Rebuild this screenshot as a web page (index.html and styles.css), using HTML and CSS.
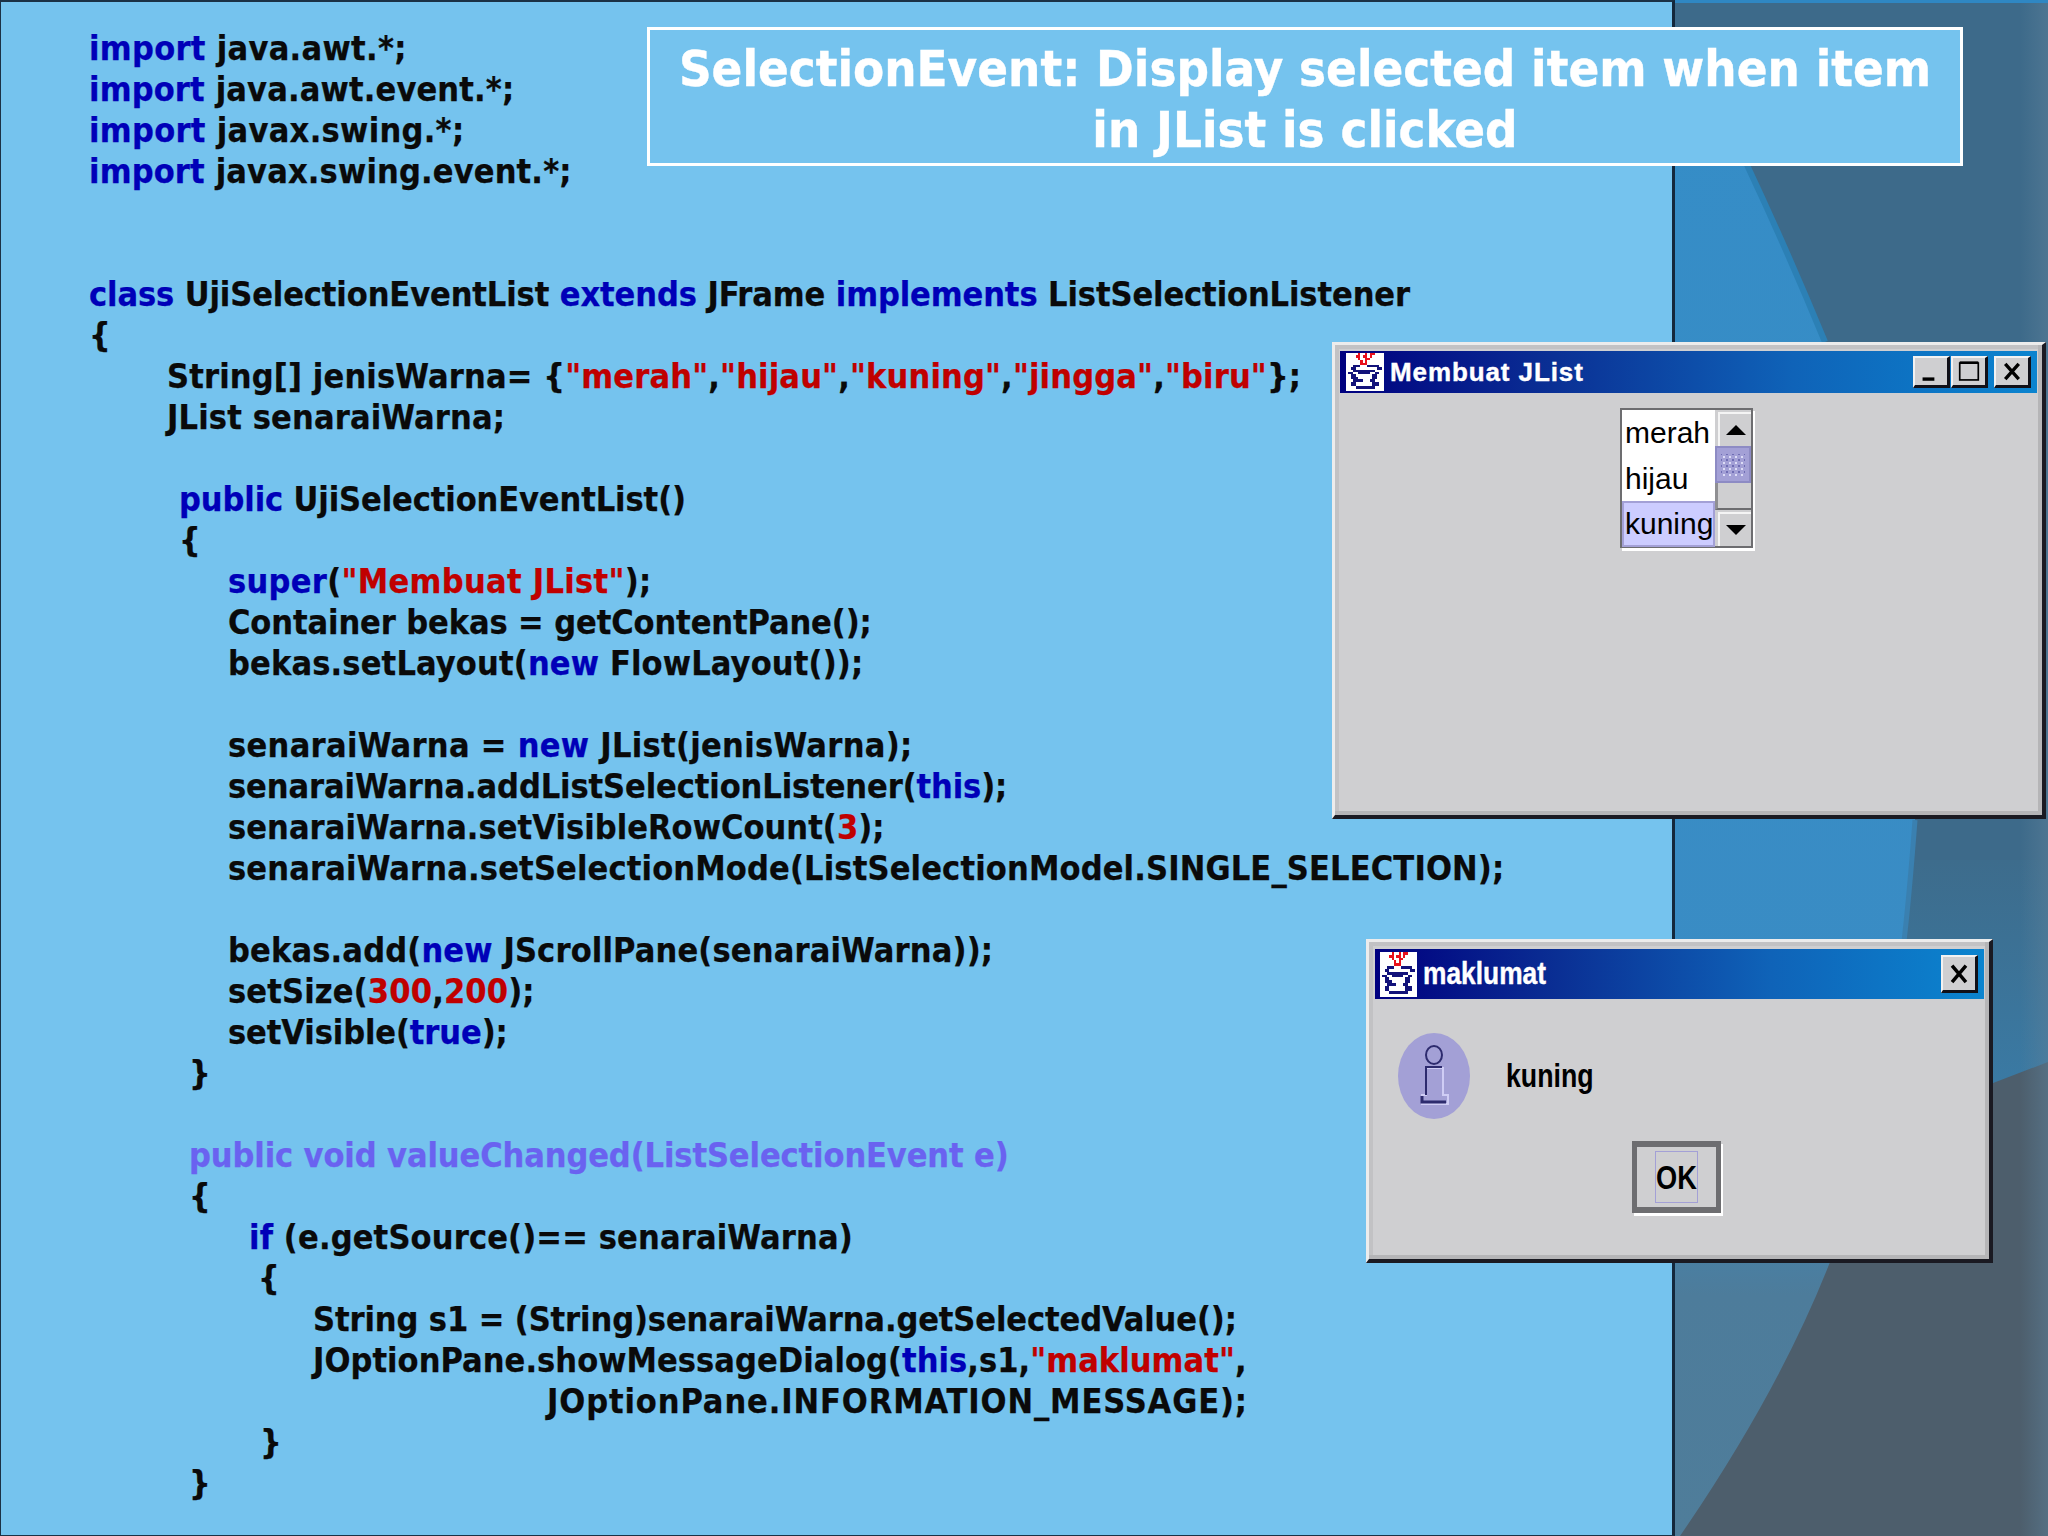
FILE: index.html
```html
<!DOCTYPE html>
<html lang="en">
<head>
<meta charset="utf-8">
<title>SelectionEvent</title>
<link rel="stylesheet" href="styles.css">
</head>
<body>
<svg class="defs" width="0" height="0" aria-hidden="true">
  <symbol id="duke" viewBox="0 0 16 16" preserveAspectRatio="none" shape-rendering="crispEdges">
    <rect width="16" height="16" fill="#fff"/>
    <path fill="#e8101c" d="M5 0h1v1H5zM8 0h1v1H8zM10 0h2v1h-2zM4 1h2v1H4zM7 1h2v1H7zM10 1h1v1h-1zM5 2h1v1H5zM8 2h2v1H8zM6 3h1v1H6zM8 3h1v1H8zM6 4h3v1H6z"/>
    <path fill="#12127a" d="M3 5h3v1H3zM9 5h5v1H9zM2 6h2v1H2zM13 6h2v1h-2zM3 7h9v1H3zM1 8h2v1H1zM5 8h5v1H5zM12 8h2v1h-2zM2 9h2v2H2zM11 9h2v2h-2zM4 10h1v1H4zM10 11h2v1h-2zM3 11h4v1H3zM2 12h2v2H2zM11 12h3v2h-3zM4 14h8v1H4z"/>
  </symbol>
</svg>
<main class="slide">
  <section class="panel">
    <div class="code">
      <div class="ln t3"><span class="kw">import</span> java.awt.*;</div>
      <div class="ln t2"><span class="kw">import</span> java.awt.event.*;</div>
      <div class="ln t3"><span class="kw">import</span> javax.swing.*;</div>
      <div class="ln t2"><span class="kw">import</span> javax.swing.event.*;</div>
      <div class="ln"></div>
      <div class="ln"></div>
      <div class="ln"><span class="kw">class</span> UjiSelectionEventList <span class="kw">extends</span> JFrame <span class="kw">implements</span> ListSelectionListener</div>
      <div class="ln">{</div>
      <div class="ln i78 t2">String[] jenisWarna= {<span class="str">"merah"</span>,<span class="str">"hijau"</span>,<span class="str">"kuning"</span>,<span class="str">"jingga"</span>,<span class="str">"biru"</span>};</div>
      <div class="ln i78 t2">JList senaraiWarna;</div>
      <div class="ln"></div>
      <div class="ln i90"><span class="kw">public</span> UjiSelectionEventList()</div>
      <div class="ln i90">{</div>
      <div class="ln i139 t3"><span class="kw">super</span>(<span class="str">"Membuat JList"</span>);</div>
      <div class="ln i139">Container bekas = getContentPane();</div>
      <div class="ln i139 t2">bekas.setLayout(<span class="kw">new</span> FlowLayout());</div>
      <div class="ln"></div>
      <div class="ln i139 t3">senaraiWarna = <span class="kw">new</span> JList(jenisWarna);</div>
      <div class="ln i139">senaraiWarna.addListSelectionListener(<span class="kw">this</span>);</div>
      <div class="ln i139 t1">senaraiWarna.setVisibleRowCount(<span class="str">3</span>);</div>
      <div class="ln i139 t2">senaraiWarna.setSelectionMode(ListSelectionModel.SINGLE_SELECTION);</div>
      <div class="ln"></div>
      <div class="ln i139 t2">bekas.add(<span class="kw">new</span> JScrollPane(senaraiWarna));</div>
      <div class="ln i139 t2">setSize(<span class="str">300</span>,<span class="str">200</span>);</div>
      <div class="ln i139">setVisible(<span class="kw">true</span>);</div>
      <div class="ln i100">}</div>
      <div class="ln"></div>
      <div class="ln i100 hl">public void valueChanged(ListSelectionEvent e)</div>
      <div class="ln i100">{</div>
      <div class="ln i160 t2"><span class="kw">if</span> (e.getSource()== senaraiWarna)</div>
      <div class="ln i169">{</div>
      <div class="ln i224">String s1 = (String)senaraiWarna.getSelectedValue();</div>
      <div class="ln i224 t1">JOptionPane.showMessageDialog(<span class="kw">this</span>,s1,<span class="str">"maklumat"</span>,</div>
      <div class="ln i458 t9">JOptionPane.INFORMATION_MESSAGE);</div>
      <div class="ln i171">}</div>
      <div class="ln i100">}</div>
    </div>
  </section>

  <div class="backdrop">
    <svg class="backdrop-art" viewBox="0 0 373 1536" preserveAspectRatio="none" aria-hidden="true">
      <defs>
        <linearGradient id="arcFill" x1="0" y1="0" x2="0" y2="1">
          <stop offset="0" stop-color="#358dc7"/>
          <stop offset="0.7" stop-color="#3a8cc4"/>
          <stop offset="0.84" stop-color="#4d7c9b"/>
          <stop offset="1" stop-color="#4f7d9a"/>
        </linearGradient>
        <linearGradient id="edgeFill" x1="0" y1="0" x2="1" y2="0">
          <stop offset="0" stop-color="#5c8099" stop-opacity="0"/>
          <stop offset="1" stop-color="#5c8099" stop-opacity=".5"/>
        </linearGradient>
        <linearGradient id="riseFill" x1="0" y1="0" x2="0" y2="1">
          <stop offset="0" stop-color="#3d6c8c"/>
          <stop offset="1" stop-color="#3a7aa4"/>
        </linearGradient>
      </defs>
      <rect width="373" height="1536" fill="#3d6a8a"/>
      <rect x="200" y="860" width="173" height="230" fill="url(#riseFill)"/>
      <path fill="#4d5e6c" d="M0 1536V1200L300 1090L373 1062V1536Z"/>
      <path fill="url(#arcFill)" d="M-5 30H25Q40 85 72 165Q112 250 150 342Q240 600 240 820Q234 900 228 950Q200 1110 155 1262Q105 1390 5 1536H-5Z"/>
      <path fill="none" stroke="#2c80b5" stroke-width="6" d="M72 165Q112 250 150 342"/>
      <path fill="none" stroke="#3a80b0" stroke-width="5" d="M240 820Q234 900 228 950"/>
      <rect x="345" y="0" width="28" height="1536" fill="url(#edgeFill)"/>
      <rect width="373" height="3" fill="#2f87c3"/>
    </svg>
  </div>

  <h1 class="headline">SelectionEvent: Display selected item when item<br>in JList is clicked</h1>

  <article class="win win-frame">
    <header class="bar bar-frame">
      <svg class="duke duke-frame"><use href="#duke"/></svg>
      <span class="bar-title title-frame">Membuat JList</span>
      <div class="bar-btns">
        <button class="wbtn" type="button" aria-label="minimise"><svg viewBox="0 0 36 32"><rect x="8" y="23" width="14" height="4" fill="#000"/></svg></button>
        <button class="wbtn" type="button" aria-label="maximise"><svg viewBox="0 0 36 32"><rect x="7" y="6" width="22" height="20" fill="none" stroke="#000" stroke-width="2"/><rect x="7" y="4" width="22" height="3" fill="#000"/></svg></button>
        <button class="wbtn wbtn-close" type="button" aria-label="close"><svg viewBox="0 0 36 32"><path d="M10 7L26 25M26 7L10 25" stroke="#000" stroke-width="4" fill="none"/></svg></button>
      </div>
    </header>
    <div class="frame-body">
      <div class="listbox">
        <ul class="items">
          <li class="item">merah</li>
          <li class="item">hijau</li>
          <li class="item item-on">kuning</li>
        </ul>
        <div class="sbar">
          <div class="sbtn"><span class="tri tri-up"></span></div>
          <div class="thumb"></div>
          <div class="track"></div>
          <div class="sbtn"><span class="tri tri-down"></span></div>
        </div>
      </div>
    </div>
  </article>

  <article class="win win-dialog">
    <header class="bar bar-dialog">
      <svg class="duke duke-dialog"><use href="#duke"/></svg>
      <span class="bar-title title-dialog">maklumat</span>
      <div class="bar-btns">
        <button class="wbtn wbtn-tall" type="button" aria-label="close"><svg viewBox="0 0 36 38"><path d="M10 10L26 29M26 10L10 29" stroke="#000" stroke-width="4" fill="none"/></svg></button>
      </div>
    </header>
    <div class="dialog-body">
      <div class="msg">
        <svg class="info" viewBox="0 0 72 86" aria-hidden="true">
          <ellipse cx="36" cy="43" rx="36" ry="43" fill="#a3a0d6"/>
          <ellipse cx="36" cy="22" rx="8" ry="9" fill="#a3a0d6" stroke="#2d2b6e" stroke-width="2"/>
          <path d="M28 62V35H45V62H50V71H24V62Z" fill="#a3a0d6" stroke="#cfcdf5" stroke-width="2"/>
          <path d="M28 62V34H44" fill="none" stroke="#2d2b6e" stroke-width="2"/>
          <path d="M24 63V69H48" fill="none" stroke="#2d2b6e" stroke-width="3"/>
        </svg>
        <span class="msg-text">kuning</span>
      </div>
      <div class="ok-wrap">
        <button class="ok" type="button"><span class="ok-focus"><span class="ok-text">OK</span></span></button>
      </div>
    </div>
  </article>
</main>
</body>
</html>
```
FILE: styles.css
```css
* { box-sizing: border-box; }
html, body { margin: 0; padding: 0; }
body { width: 2048px; height: 1536px; overflow: hidden; background: #3d6a8a; }
.defs { position: absolute; }

.slide {
  position: relative;
  display: flex;
  width: 2048px;
  height: 1536px;
}
.panel {
  flex: 0 0 1675px;
  height: 1536px;
  background: #75c3ee;
  border-top: 2px solid #1b3145;
  border-left: 1px solid #1b3145;
  border-right: 3px solid #14283c;
  border-bottom: 1px solid #1b3145;
  padding: 26px 0 0 88px;
}
.backdrop { flex: 1 1 auto; position: relative; }
.backdrop-art { display: block; width: 100%; height: 100%; }

/* Code */
.code {
  font-family: "DejaVu Sans Condensed", "DejaVu Sans", sans-serif;
  font-stretch: condensed;
  font-weight: 700;
  font-size: 34px;
  line-height: 41px;
  letter-spacing: -0.1px;
  color: #0a0a0a;
  -webkit-text-stroke: 0.25px currentColor;
}
.ln { height: 41px; white-space: pre; }
.kw { color: #0000b8; }
.str { color: #c00000; }
.hl { color: #6a62f0; }
.t1 { letter-spacing: 0.05px; }
.t2 { letter-spacing: 0.15px; }
.t3 { letter-spacing: 0.3px; }
.t9 { letter-spacing: 0.9px; }
.i78 { padding-left: 78px; }
.i90 { padding-left: 90px; }
.i100 { padding-left: 100px; }
.i139 { padding-left: 139px; }
.i160 { padding-left: 160px; }
.i169 { padding-left: 169px; }
.i171 { padding-left: 171px; }
.i224 { padding-left: 224px; }
.i458 { padding-left: 458px; }

/* Title */
.headline {
  position: absolute;
  left: 647px;
  top: 27px;
  width: 1316px;
  height: 139px;
  margin: 0;
  padding: 8px 0 0;
  border: 3px solid #fff;
  background: #75c3ee;
  color: #fff;
  font-family: "DejaVu Sans Condensed", "DejaVu Sans", sans-serif;
  font-stretch: condensed;
  font-weight: 700;
  font-size: 50.5px;
  line-height: 61px;
  text-align: center;
  white-space: nowrap;
  -webkit-text-stroke: 0.4px #fff;
}

/* Windows */
.win {
  position: absolute;
  display: flex;
  flex-direction: column;
  background: #cfcfd1;
  border-style: solid;
  border-width: 3px 4px 4px 3px;
  border-color: #ececec #1a1a22 #1a1a22 #ececec;
  box-shadow: inset -4px -4px 0 #b5b5b7, inset 4px 4px 0 #c2c2c4;
}
.win-frame { left: 1332px; top: 342px; width: 714px; height: 477px; padding: 6px 5px 0 5px; }
.win-dialog { left: 1366px; top: 939px; width: 627px; height: 324px; padding: 7px 5px 0 6px; }

.bar {
  display: flex;
  align-items: center;
  flex: none;
  background: linear-gradient(90deg, #00007f 0%, #0a2f94 30%, #0f63b8 65%, #0b84cf 100%);
}
.bar-frame { height: 42px; padding: 0 6px 0 6px; }
.bar-dialog { height: 50px; padding: 0 6px 0 5px; }
.duke { flex: none; display: block; }
.duke-frame { width: 38px; height: 38px; }
.duke-dialog { width: 37px; height: 45px; }
.bar-title {
  display: block;
  margin-left: 6px;
  color: #fff;
  font-family: "Liberation Sans", Arial, sans-serif;
  font-weight: 700;
  white-space: nowrap;
  transform-origin: left center;
  -webkit-text-stroke: 0.4px #fff;
}
.title-frame { font-size: 26px; letter-spacing: 0.9px; }
.title-dialog { font-size: 31px; transform: scaleX(.85); }
.bar-btns { display: flex; margin-left: auto; }
.wbtn {
  display: block;
  width: 37px;
  height: 32px;
  margin: 0 0 0 1px;
  padding: 0;
  background: #cfcfd1;
  border-style: solid;
  border-width: 2px 3px 3px 2px;
  border-color: #f2f2f2 #101018 #101018 #f2f2f2;
}
.wbtn svg { display: block; width: 100%; height: 100%; }
.wbtn-close { margin-left: 6px; }
.wbtn-tall { height: 38px; }

/* Frame content */
.frame-body { display: flex; justify-content: center; padding: 15px 4px 0 0; }
.listbox {
  display: flex;
  width: 133px;
  height: 140px;
  border: 2px solid #6d6d70;
  box-shadow: 2px 3px 0 #fff;
  background: #cfcfd1;
}
.items {
  flex: 0 0 93px;
  margin: 0;
  padding: 0;
  list-style: none;
  background: #fff;
  font-family: "Liberation Sans", Arial, sans-serif;
  font-size: 30px;
  color: #000;
}
.item { height: 45.5px; line-height: 46px; padding-left: 3px; }
.item-on { background: #ccccff; box-shadow: inset 0 0 0 2px #a3a0d6; }
.sbar { flex: 1 1 auto; display: flex; flex-direction: column; }
.sbtn {
  flex: none;
  display: flex;
  align-items: center;
  justify-content: center;
  height: 34px;
  margin: 2px 0 0 3px;
  background: #cfcfd1;
  border-top: 2px solid #f4f4f4;
  border-left: 2px solid #f4f4f4;
}
.tri { width: 0; height: 0; border-left: 10px solid transparent; border-right: 10px solid transparent; }
.tri-up { border-bottom: 10px solid #000; }
.tri-down { border-top: 10px solid #000; }
.thumb {
  flex: none;
  display: flex;
  align-items: center;
  justify-content: center;
  height: 37px;
  background: #a3a0d6;
  border: 2px solid #8d8bc4;
}
.thumb::before {
  content: "";
  width: 24px;
  height: 22px;
  background-image:
    radial-gradient(circle, #dcdcf6 1px, transparent 1.4px),
    radial-gradient(circle, #6f6db4 1px, transparent 1.4px);
  background-size: 6px 6px;
  background-position: 0 0, 3px 3px;
}
.track { flex: 1 1 auto; background: #cfcfd1; border-bottom: 2px solid #6d6d70; border-left: 3px solid #8f8f92; }

/* Dialog content */
.dialog-body { display: flex; flex-direction: column; }
.msg { display: flex; align-items: center; padding: 34px 0 0 23px; }
.info { flex: none; display: block; width: 72px; height: 86px; }
.msg-text {
  display: block;
  margin-left: 36px;
  font-family: "Liberation Sans", Arial, sans-serif;
  font-weight: 700;
  font-size: 33px;
  color: #000;
  transform: scaleX(.81);
  transform-origin: left center;
}
.ok-wrap { display: flex; justify-content: center; padding: 22px 6px 0 0; }
.ok {
  display: flex;
  align-items: center;
  justify-content: center;
  width: 89px;
  height: 72px;
  padding: 0;
  background: #cfcfd1;
  border-style: solid;
  border-width: 6px 5px 6px 5px;
  border-color: #6d6d70;
  box-shadow: 2px 3px 0 #fff;
}
.ok-focus {
  display: flex;
  align-items: center;
  justify-content: center;
  width: 43px;
  height: 52px;
  border: 1px solid #a3a0d6;
}
.ok-text {
  font-family: "Liberation Sans", Arial, sans-serif;
  font-weight: 700;
  font-size: 34px;
  color: #000;
  display: block;
  transform: scaleX(.8);
}
```
